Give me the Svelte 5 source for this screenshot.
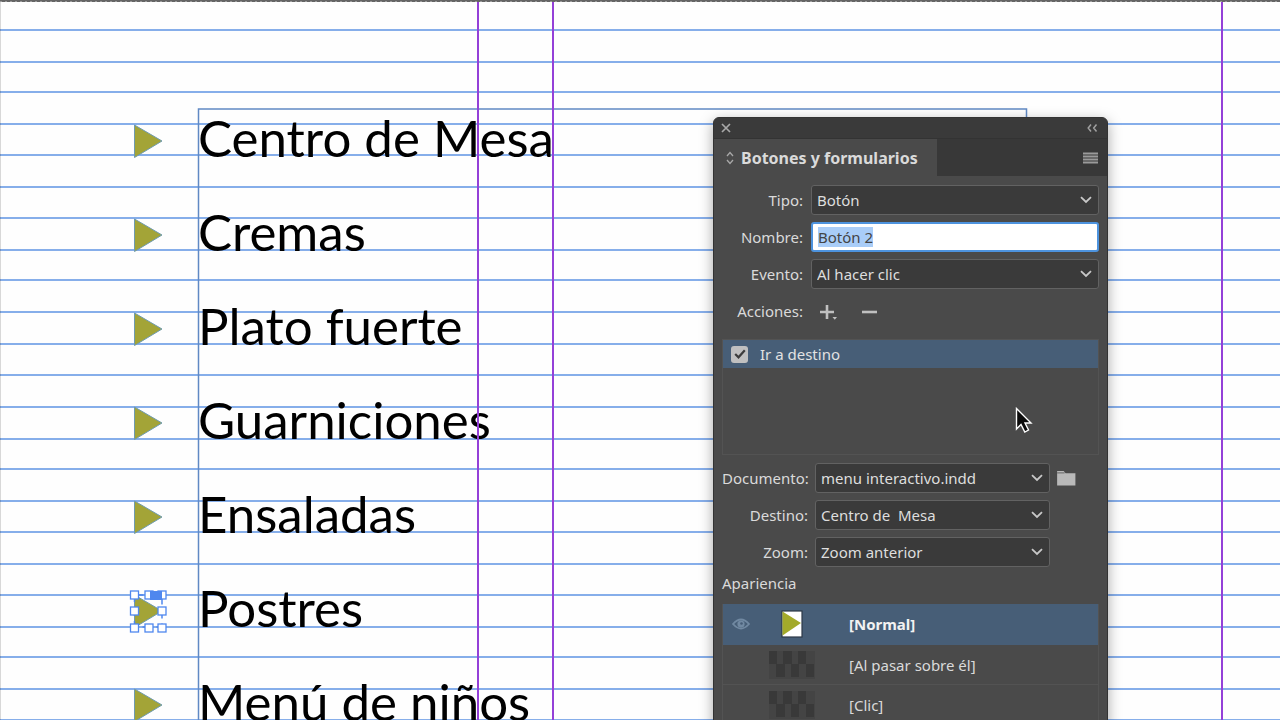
<script>
  import { onMount } from 'svelte';

  const courses = ['Centro de Mesa', 'Cremas', 'Plato fuerte', 'Guarniciones', 'Ensaladas', 'Postres', 'Menú de niños'];
  const selectedCourse = 5;
  const baselines = [30, 62, 92, 124, 155, 187, 218, 250, 280, 312, 344, 375, 407, 439, 469, 501, 532, 564, 595, 627, 657, 689, 720];
  const guides = [477, 552, 1221];

  const eventFields = [
    { id: 'tipo', label: 'Tipo:', value: 'Botón' },
    { id: 'nombre', label: 'Nombre:', value: 'Botón 2', text: true },
    { id: 'evento', label: 'Evento:', value: 'Al hacer clic' }
  ];
  const targetFields = [
    { id: 'documento', label: 'Documento:', value: 'menu interactivo.indd', folder: true },
    { id: 'destino', label: 'Destino:', value: 'Centro de\u00a0 Mesa' },
    { id: 'zoom', label: 'Zoom:', value: 'Zoom anterior' }
  ];
  const states = ['[Normal]', '[Al pasar sobre él]', '[Clic]'];

  let panel;
  onMount(() => {
    const field = panel.querySelector('#nombre');
    field.focus({ preventScroll: true });
    field.select();
  });
</script>

{#snippet dropdown(field)}
  <span class="dropdown">
    <select id={field.id}><option>{field.value}</option></select>
    <svg class="chevron" width="12" height="8" viewBox="0 0 12 8" aria-hidden="true">
      <path d="M1 1.2 L6 6 L11 1.2" fill="none" stroke="#c8c8c8" stroke-width="1.8" />
    </svg>
  </span>
{/snippet}

<main class="page">
  <svg class="lines" width="100%" height="100%" aria-hidden="true">
    {#each baselines as y}
      <line x1="0" x2="100%" y1={y} y2={y} stroke="#86aeea" stroke-width="2" />
    {/each}
    <path d="M198.500 720 V109 H1026.500 V130" fill="none" stroke="#6089c4" stroke-width="1.500" />
  </svg>

  <ul class="courses">
    {#each courses as course, i}
      <li>
        <svg class="marker" width="38" height="46" viewBox="0 0 38 46" aria-hidden="true">
          <path d="M5.500 7 L33 23 L5.500 39.500 Z" fill="#a3a437" stroke="#6f9bb0" stroke-width="1" />
          {#if i === selectedCourse}
            <path d="M5.500 7 H33 V39 H5.500 Z" fill="none" stroke="#4f87ee" stroke-width="1.500" stroke-dasharray="9 5" />
            <g fill="#fff" stroke="#4f87ee" stroke-width="1.300">
              <rect x="1.500" y="3" width="8" height="8" /><rect x="16" y="3" width="8" height="8" /><rect x="29" y="3" width="8" height="8" />
              <rect x="1.500" y="19" width="8" height="8" /><rect x="29" y="19" width="8" height="8" />
              <rect x="1.500" y="36" width="8" height="8" /><rect x="16" y="36" width="8" height="8" /><rect x="29" y="36" width="8" height="8" />
            </g>
            <rect x="21" y="3" width="12" height="9" fill="#4f87ee" />
          {/if}
        </svg>
        <span>{course}</span>
      </li>
    {/each}
  </ul>

  <svg class="lines" width="100%" height="100%" aria-hidden="true">
    {#each guides as x}
      <rect {x} y="0" width="2" height="100%" fill="#9440d8" />
    {/each}
    <rect width="100%" height="2" fill="#656565" />
    <line x1="0" x2="100%" y1="1.500" y2="1.500" stroke="#999" stroke-dasharray="2 3" />
    <rect y="2" width="1" height="100%" fill="#000" fill-opacity=".15" />
  </svg>

  <section class="panel" bind:this={panel} aria-labelledby="panel-title">
    <header class="titlebar">
      <button aria-label="Cerrar">
        <svg width="10" height="10" viewBox="0 0 10 10"><path d="M1 1 L9 9 M9 1 L1 9" stroke="#a8a8a8" stroke-width="1.700" /></svg>
      </button>
      <button aria-label="Contraer">
        <svg width="11" height="8" viewBox="0 0 11 8"><path d="M4 .5 L1.200 4 L4 7.500 M9.500 .5 L6.700 4 L9.500 7.500" fill="none" stroke="#a0a0a0" stroke-width="1.500" /></svg>
      </button>
    </header>
    <div class="tabs">
      <div class="tab">
        <svg width="8" height="14" viewBox="0 0 8 14" aria-hidden="true"><path d="M1 5 L4 1.500 L7 5 M1 9 L4 12.500 L7 9" fill="none" stroke="#a8a8a8" stroke-width="1.300" /></svg>
        <h1 id="panel-title">Botones y formularios</h1>
      </div>
      <button class="menu" aria-label="Menú del panel">
        <svg width="15" height="12" viewBox="0 0 15 12"><path d="M0 1.500 H15 M0 4.500 H15 M0 7.500 H15 M0 10.500 H15" stroke="#9a9a9a" stroke-width="1.900" /></svg>
      </button>
    </div>

    <div class="body">
      <div class="fields wide">
        {#each eventFields as field}
          <label for={field.id}>{field.label}</label>
          {#if field.text}
            <input id={field.id} type="text" value={field.value} />
          {:else}
            {@render dropdown(field)}
          {/if}
        {/each}
        <span class="caption">Acciones:</span>
        <div class="tools">
          <button aria-label="Agregar acción">
            <svg width="20" height="18" viewBox="0 0 20 18"><path d="M1 10 H15 M8 3 V17" stroke="#c0c0c0" stroke-width="2.600" /><path d="M13.500 15 H18 L15.800 17.800 Z" fill="#c0c0c0" /></svg>
          </button>
          <button aria-label="Eliminar acción">
            <svg width="15" height="18" viewBox="0 0 15 18"><path d="M0 10 H15" stroke="#c0c0c0" stroke-width="2.600" /></svg>
          </button>
        </div>
      </div>

      <div class="actions">
        <label class="action">
          <input type="checkbox" checked />
          <svg class="tick" width="12" height="10" viewBox="0 0 12 10" aria-hidden="true"><path d="M1.200 5 L4.500 8.300 L10.800 1.300" fill="none" stroke="#3c3c3c" stroke-width="2.200" /></svg>
          <span>Ir a destino</span>
        </label>
      </div>

      <div class="fields target">
        {#each targetFields as field}
          <label for={field.id}>{field.label}</label>
          {@render dropdown(field)}
          {#if field.folder}
            <button class="folder" aria-label="Elegir documento">
              <svg width="19" height="15" viewBox="0 0 20 16"><path d="M0 0 H7 L9 2.500 H19.500 V15.500 H0 Z" fill="#b9b9b9" /><path d="M0 2 H8" stroke="#4a4a4a" stroke-width=".8" /></svg>
            </button>
          {:else}
            <span></span>
          {/if}
        {/each}
      </div>

      <h2>Apariencia</h2>
      <ul class="states">
        {#each states as state, i}
          <li class:active={i === 0}>
            <span class="eye">
              {#if i === 0}
                <svg width="18" height="12" viewBox="0 0 18 12" aria-hidden="true"><path d="M1 6 Q9 -3 17 6 Q9 15 1 6 Z" fill="none" stroke="#7189a2" stroke-width="1.800" /><circle cx="9" cy="6" r="3.600" fill="#7189a2" /><circle cx="9.500" cy="5.500" r="1.300" fill="#475e77" /></svg>
              {/if}
            </span>
            <span class="thumb">
              {#if i === 0}
                <svg width="22" height="28" viewBox="0 0 22 28" aria-hidden="true"><rect x="1" y="1" width="20" height="26" fill="#fff" stroke="#2d3a48" stroke-width="1.200" /><path d="M1.500 1.500 L20 13 L1.500 25.500 Z" fill="#a3aa2a" /></svg>
              {:else}
                <svg width="46" height="28" viewBox="0 0 46 28" aria-hidden="true">
                  <rect width="46" height="28" fill="#444" />
                  <path d="M0 0 H8 V13 H0 Z M14 0 H23 V13 H14 Z M29 0 H37 V13 H29 Z M7 13 H16 V26 H7 Z M22 13 H30 V26 H22 Z M37 13 H45 V26 H37 Z" fill="#393939" />
                </svg>
              {/if}
            </span>
            <span>{state}</span>
          </li>
        {/each}
      </ul>
    </div>
  </section>

  <svg class="pointer" width="18" height="28" viewBox="0 0 18 28" aria-hidden="true">
    <path d="M1.500 1.500 V22 L6 17.500 L9.800 25 L13.500 23 L10 16 H16 Z" fill="#0b0b0b" stroke="#fff" stroke-width="1.400" />
  </svg>
</main>

<style>
  :global(body) { margin: 0; overflow: hidden; }
  * { box-sizing: border-box; }
  .page {
    position: relative;
    height: 100vh;
    overflow: hidden;
    background: #fefefe;
    font-family: "Noto Sans", "Open Sans", sans-serif;
  }
  ul { list-style: none; margin: 0; padding: 0; }
  button { display: flex; padding: 0; border: 0; background: none; }
  svg { display: block; flex: none; }
  .lines { position: absolute; inset: 0; }

  .courses {
    position: relative;
    padding: 91px 0 0 129px;
    font: 51px/94px Lato, sans-serif;
    color: #000;
  }
  .courses li { display: flex; align-items: center; gap: 31px; height: 94px; white-space: nowrap; }
  .marker { margin-top: 5px; }

  .panel {
    position: absolute;
    top: 117px;
    left: 713px;
    width: 395px;
    min-height: calc(100vh - 117px);
    border: 1px solid #333;
    border-radius: 6px 6px 0 0;
    background: #4a4a4a;
    color: #dadada;
    font-size: 15px;
    line-height: 20px;
    box-shadow: 0 4px 14px rgb(0 0 0 / 35%);
  }
  .titlebar {
    display: flex;
    align-items: center;
    justify-content: space-between;
    height: 20px;
    padding: 0 9px 0 7px;
    border-radius: 5px 5px 0 0;
    background: #3a3a3a;
  }
  .tabs { display: flex; justify-content: space-between; height: 38px; background: #383838; border-top: 1px solid #333; }
  .tab { display: flex; align-items: center; gap: 7px; padding: 0 19px 0 12px; background: #4a4a4a; }
  h1 { margin: 0; font-size: 16px; line-height: 20px; font-weight: 700; white-space: nowrap; }
  .menu { align-items: center; padding-right: 9px; }

  .body { padding: 9px 8px 0 8px; }
  .fields { display: grid; align-items: center; gap: 7px 8px; }
  .wide { grid-template-columns: 81px 1fr; }
  .target { grid-template-columns: 86px 235px 1fr; column-gap: 7px; margin-top: 8px; }
  .fields label, .caption { text-align: right; white-space: nowrap; }
  .dropdown { position: relative; display: block; }
  select, input[type="text"] {
    display: block;
    width: 100%;
    height: 30px;
    margin: 0;
    padding: 0 6px;
    border: 1px solid #626262;
    border-radius: 3px;
    background: #3a3a3a;
    color: #dedede;
    font: inherit;
    appearance: none;
    outline: 0;
  }
  select { padding: 0 28px 0 5px; }
  input[type="text"] { background: #fff; border: 2px solid #4d93de; padding: 0 5px; color: #444; }
  input::selection { background: #a9cdf8; color: #444; }
  .chevron { position: absolute; right: 7px; top: 11px; pointer-events: none; }
  .tools { display: flex; align-items: center; gap: 23px; height: 30px; padding-left: 8px; }

  .actions { height: 116px; margin-top: 13px; border: 1px solid #535353; }
  .action { position: relative; display: flex; align-items: center; gap: 12px; height: 28px; padding-left: 8px; background: #475e77; color: #e2e2e2; }
  .action input { appearance: none; width: 17px; height: 17px; margin: 0; border-radius: 3px; background: #c0c0c0; }
  .tick { position: absolute; left: 11px; top: 9px; pointer-events: none; }

  h2 { margin: 6px 0 0; font-size: 15px; line-height: 20px; font-weight: 400; }
  .states { margin-top: 11px; border: 1px solid #535353; border-top: 0; }
  .states li { display: grid; grid-template-columns: 36px 66px 1fr; align-items: center; height: 40px; border-bottom: 1px solid #535353; }
  .states .active { height: 41px; border-color: #475e77; background: #475e77; color: #f2f2f2; font-weight: 700; }
  .eye { padding-left: 9px; }
  .thumb { display: flex; justify-content: center; }
  .states li > span:last-child { padding-left: 24px; }
  .pointer { position: absolute; left: 1015px; top: 407px; }
</style>
